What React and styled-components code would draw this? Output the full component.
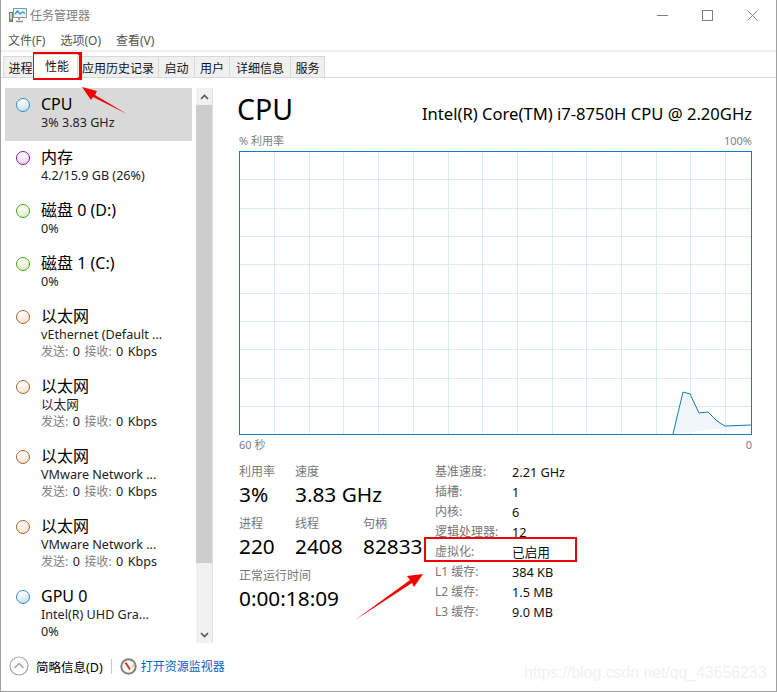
import React from 'react';
import styled, { createGlobalStyle } from 'styled-components';

const GlobalStyle = createGlobalStyle`
  html, body { margin: 0; padding: 0; background: #fff; }
  * { box-sizing: border-box; }
`;

const Window = styled.div`
  position: relative;
  width: 777px;
  height: 692px;
  overflow: hidden;
  display: flex;
  flex-direction: column;
  background: #fff;
  border: 1px solid #a0a0a0;
  border-top: none;
  font-family: "Noto Sans", "Noto Sans CJK SC", sans-serif;
  color: #000;
`;

const TitleBar = styled.div`
  height: 30px;
  display: flex;
  align-items: center;
  padding-left: 8px;
  gap: 3px;
  font-size: 12px;
  color: #808080;
`;

const WindowButtons = styled.div`
  margin-left: auto;
  display: flex;
  align-items: center;
  gap: 34px;
  padding-right: 18px;
`;

const MenuBar = styled.div`
  height: 20px;
  display: flex;
  align-items: center;
  padding-left: 7px;
  gap: 15px;
  font-size: 12px;
  color: #555;
`;

const TabBar = styled.div`
  height: 28px;
  padding: 4px 0 0 2px;
  display: flex;
  align-items: stretch;
  border-top: 2px solid #f0f0f0;
  border-bottom: 1px solid #d9d9d9;
`;

const Tab = styled.div`
  width: ${(p) => p.$w}px;
  display: flex;
  align-items: center;
  justify-content: center;
  font-size: 12px;
  background: #f0f0f0;
  border: 1px solid #d9d9d9;
  border-left-width: 0;
  border-bottom: none;
  color: #111;
  padding-top: 1px;

  &:first-child {
    border-left-width: 1px;
  }

  ${(p) => p.$active && `
    position: relative;
    z-index: 1;
    background: #fff;
    margin: -2px 0 -1px -4px;
    padding: 0 0 1px 3px;
  `}
`;

const Body = styled.div`
  flex: 1;
  display: flex;
  min-height: 0;
`;

const Sidebar = styled.div`
  width: 212px;
  padding: 10px 0 0 4px;
  display: flex;
  height: 565px;
  flex-shrink: 0;
`;

const List = styled.div`
  width: 187px;
  display: flex;
  flex-direction: column;
`;

const Item = styled.div`
  height: ${(p) => p.$h}px;
  flex-shrink: 0;
  display: flex;
  padding: 7px 0 0 11px;
  gap: 11px;
  background: ${(p) => (p.$selected ? '#d9d9d9' : 'transparent')};
`;

const Dot = styled.span`
  width: 14px;
  height: 14px;
  margin-top: 3px;
  border-radius: 50%;
  flex-shrink: 0;
  border: 1.5px solid ${(p) => p.$color};
  background: linear-gradient(160deg, #ffffff 20%, ${(p) => p.$fill} 100%);
`;

const ItemText = styled.div`
  display: flex;
  flex-direction: column;
`;

const ItemTitle = styled.div`
  font-size: 16px;
  line-height: 19px;
  height: 19px;
  white-space: nowrap;
`;

const ItemSub = styled.div`
  font-size: 12.6px;
  line-height: 17px;
  height: 17px;
  white-space: nowrap;
  color: #222;
  word-spacing: ${(p) => (p.$net ? 1.2 : 0)}px;
`;

const Muted = styled.span`
  color: #808080;
  font-size: 12px;
`;

const Scrollbar = styled.div`
  width: 17px;
  margin-left: 4px;
  background: #f0f0f0;
  display: flex;
  flex-direction: column;
  align-items: stretch;
  border-right: 1px solid #e0e0e0;
`;

const ScrollArrow = styled.div`
  height: 17px;
  display: flex;
  align-items: center;
  justify-content: center;
`;

const ScrollThumb = styled.div`
  height: 458px;
  background: #cdcdcd;
`;

const ScrollSpace = styled.div`
  flex: 1;
`;

const Content = styled.div`
  flex: 1;
  padding: 14px 24px 0 26px;
  display: flex;
  flex-direction: column;
  min-width: 0;
`;

const Header = styled.div`
  display: flex;
  align-items: flex-end;
  justify-content: space-between;
  height: 35px;
`;

const BigTitle = styled.div`
  font-size: 28.5px;
  line-height: 35px;
  margin-left: -2px;
`;

const Model = styled.div`
  font-size: 16.6px;
  line-height: 22px;
  padding-bottom: 2px;
`;

const ChartCaption = styled.div`
  display: flex;
  justify-content: space-between;
  font-size: 11px;
  line-height: 15px;
  height: 15px;
  margin-top: ${(p) => p.$top}px;
  color: #808080;
`;

const Chart = styled.svg`
  display: block;
  margin-top: 3px;
  width: 513px;
  height: 284px;
`;

const Stats = styled.div`
  display: flex;
  margin-top: 11px;
`;

const StatsLeft = styled.div`
  width: 196px;
  display: flex;
  flex-direction: column;
`;

const StatRow = styled.div`
  display: flex;
  height: 52px;
`;

const Stat = styled.div`
  width: ${(p) => p.$w}px;
  flex-shrink: 0;
`;

const StatLabel = styled.div`
  font-size: 12px;
  line-height: 17px;
  color: #777;
  white-space: nowrap;
`;

const StatValue = styled.div`
  font-size: 20.8px;
  line-height: 28px;
  white-space: nowrap;
`;

const Specs = styled.div`
  display: grid;
  grid-template-columns: 77px auto;
  grid-auto-rows: 20px;
  align-content: start;
  font-size: 12px;
  line-height: 20px;
  margin-top: -1px;
`;

const SpecKey = styled.div`
  color: #777;
  white-space: nowrap;
`;

const SpecValue = styled.div`
  color: #111;
  white-space: nowrap;
  font-size: 12.7px;
`;

const Footer = styled.div`
  position: absolute;
  left: 8px;
  bottom: 15px;
  display: flex;
  align-items: center;
  height: 20px;
`;

const FooterLabel = styled.span`
  font-size: 12.5px;
  margin-left: 7px;
`;

const Separator = styled.span`
  width: 1px;
  height: 15px;
  margin: 0 8px;
  background: #c8c8c8;
`;

const FooterLink = styled.span`
  font-size: 12px;
  margin-left: 4px;
  color: #0066cc;
`;

const Mark = styled.div`
  position: absolute;
  left: ${(p) => p.$x}px;
  top: ${(p) => p.$y}px;
  width: ${(p) => p.$w}px;
  height: ${(p) => p.$h}px;
  border: ${(p) => p.$b}px solid #f00000;
  pointer-events: none;
`;

const ArrowLayer = styled.svg`
  position: absolute;
  left: -1px;
  top: 0;
  width: 777px;
  height: 692px;
  pointer-events: none;
`;

const Watermark = styled.div`
  position: absolute;
  left: 523px;
  top: 663px;
  font-family: "Liberation Sans", sans-serif;
  font-size: 15.8px;
  line-height: 20px;
  color: #f1f1f1;
  white-space: nowrap;
`;

const BLUE = { color: '#2f8fc4', fill: '#bcd8ee' };
const PURPLE = { color: '#8b12ae', fill: '#e6d0ee' };
const GREEN = { color: '#4da60c', fill: '#d5ebc3' };
const ORANGE = { color: '#a7642a', fill: '#f5dcc6' };

const items = [
  { ...BLUE, h: 53, title: 'CPU', lines: ['3% 3.83 GHz'], selected: true },
  { ...PURPLE, h: 53, title: '内存', lines: ['4.2/15.9 GB (26%)'] },
  { ...GREEN, h: 53, title: '磁盘 0 (D:)', lines: ['0%'] },
  { ...GREEN, h: 53, title: '磁盘 1 (C:)', lines: ['0%'] },
  { ...ORANGE, h: 70, title: '以太网', lines: ['vEthernet (Default ...'], net: true },
  { ...ORANGE, h: 70, title: '以太网', lines: ['以太网'], net: true },
  { ...ORANGE, h: 70, title: '以太网', lines: ['VMware Network ...'], net: true },
  { ...ORANGE, h: 70, title: '以太网', lines: ['VMware Network ...'], net: true },
  { ...BLUE, h: 65, title: 'GPU 0', lines: ['Intel(R) UHD Gra...', '0%'] },
];

const tabs = [
  { label: '进程', w: 35 },
  { label: '性能', w: 44, active: true },
  { label: '应用历史记录', w: 81 },
  { label: '启动', w: 36 },
  { label: '用户', w: 35 },
  { label: '详细信息', w: 61 },
  { label: '服务', w: 34 },
];

const specs = [
  ['基准速度:', '2.21 GHz'],
  ['插槽:', '1'],
  ['内核:', '6'],
  ['逻辑处理器:', '12'],
  ['虚拟化:', '已启用'],
  ['L1 缓存:', '384 KB'],
  ['L2 缓存:', '1.5 MB'],
  ['L3 缓存:', '9.0 MB'],
];

const AppIcon = () => (
  <svg width="18" height="16" viewBox="0 0 18 16">
    <rect x="0.5" y="5.5" width="3" height="9" fill="#d6d6d6" stroke="#6f7a6f" />
    <rect x="1" y="12" width="2" height="2" fill="#6bb04a" />
    <rect x="4.5" y="1.5" width="13" height="9" fill="#e6f4fb" stroke="#8a98a2" />
    <path d="M6 7l2.5-3 2.5 3 2.5-2 2.5 1.5" fill="none" stroke="#2f8fd0" strokeWidth="1.2" />
    <path d="M10 11v2M7 14.5h7" stroke="#8a8a8a" strokeWidth="1.5" />
  </svg>
);

const MonitorIcon = () => (
  <svg width="17" height="17" viewBox="0 0 17 17">
    <circle cx="8.5" cy="8.5" r="7.2" fill="#fbf7f2" stroke="#808080" strokeWidth="2" />
    <path d="M5.5 4.5l4.5 7" stroke="#d92c1d" strokeWidth="1.8" />
    <path d="M13 6.5v3" stroke="#c9a36a" />
  </svg>
);

const CpuChart = () => {
  const vLines = [];
  for (let x = 35; x < 512; x += 34.7) vLines.push(Math.round(x) + 0.5);
  const hLines = [];
  for (let y = 28.4; y < 283; y += 28.3) hLines.push(Math.round(y) + 0.5);
  const points = '434,283 444,241 451,243 460,262 469,261 478,270 486,275 512,274';
  return (
    <Chart viewBox="0 0 513 284">
      <rect x="0.5" y="0.5" width="512" height="283" fill="#fff" />
      {vLines.map((x) => (
        <line key={x} x1={x} x2={x} y1="1" y2="283" stroke="#d9eaf4" />
      ))}
      {hLines.map((y) => (
        <line key={y} x1="1" x2="512" y1={y} y2={y} stroke="#d9eaf4" />
      ))}
      <polygon points={points} fill="#f1f6fa" />
      <polyline points={points} fill="none" stroke="#117dbb" />
      <rect x="0.5" y="0.5" width="512" height="283" fill="none" stroke="#117dbb" />
    </Chart>
  );
};

export default function App() {
  return (
    <>
      <GlobalStyle />
      <Window>
        <TitleBar>
          <AppIcon />
          <span>任务管理器</span>
          <WindowButtons>
            <svg width="11" height="11" viewBox="0 0 11 11"><path d="M0 5.5h11" stroke="#808080" /></svg>
            <svg width="11" height="11" viewBox="0 0 11 11"><rect x="0.5" y="0.5" width="10" height="10" fill="none" stroke="#808080" /></svg>
            <svg width="11" height="11" viewBox="0 0 11 11"><path d="M0.5 0.5l10 10M10.5 0.5l-10 10" stroke="#808080" /></svg>
          </WindowButtons>
        </TitleBar>
        <MenuBar>
          <span>文件(F)</span>
          <span>选项(O)</span>
          <span>查看(V)</span>
        </MenuBar>
        <TabBar>
          {tabs.map((t) => (
            <Tab key={t.label} $w={t.w} $active={t.active}>{t.label}</Tab>
          ))}
        </TabBar>
        <Body>
          <Sidebar>
            <List>
              {items.map((it, i) => (
                <Item key={i} $h={it.h} $selected={it.selected}>
                  <Dot $color={it.color} $fill={it.fill} />
                  <ItemText>
                    <ItemTitle>{it.title}</ItemTitle>
                    {it.lines.map((l) => <ItemSub key={l}>{l}</ItemSub>)}
                    {it.net && <ItemSub $net><Muted>发送:</Muted> 0 <Muted>接收:</Muted> 0 Kbps</ItemSub>}
                  </ItemText>
                </Item>
              ))}
            </List>
            <Scrollbar>
              <ScrollArrow>
                <svg width="9" height="6" viewBox="0 0 9 6"><path d="M1 5l3.5-3.5L8 5" fill="none" stroke="#555" strokeWidth="1.6" /></svg>
              </ScrollArrow>
              <ScrollThumb />
              <ScrollSpace />
              <ScrollArrow>
                <svg width="9" height="6" viewBox="0 0 9 6"><path d="M1 1l3.5 3.5L8 1" fill="none" stroke="#555" strokeWidth="1.6" /></svg>
              </ScrollArrow>
            </Scrollbar>
          </Sidebar>
          <Content>
            <Header>
              <BigTitle>CPU</BigTitle>
              <Model>Intel(R) Core(TM) i7-8750H CPU @ 2.20GHz</Model>
            </Header>
            <ChartCaption $top={6}><span>% 利用率</span><span>100%</span></ChartCaption>
            <CpuChart />
            <ChartCaption $top={2}><span>60 秒</span><span>0</span></ChartCaption>
            <Stats>
              <StatsLeft>
                <StatRow>
                  <Stat $w={56}><StatLabel>利用率</StatLabel><StatValue>3%</StatValue></Stat>
                  <Stat $w={68}><StatLabel>速度</StatLabel><StatValue>3.83 GHz</StatValue></Stat>
                </StatRow>
                <StatRow>
                  <Stat $w={56}><StatLabel>进程</StatLabel><StatValue>220</StatValue></Stat>
                  <Stat $w={68}><StatLabel>线程</StatLabel><StatValue>2408</StatValue></Stat>
                  <Stat $w={60}><StatLabel>句柄</StatLabel><StatValue>82833</StatValue></Stat>
                </StatRow>
                <StatRow>
                  <Stat $w={120}><StatLabel>正常运行时间</StatLabel><StatValue>0:00:18:09</StatValue></Stat>
                </StatRow>
              </StatsLeft>
              <Specs>
                {specs.map(([k, v]) => (
                  <React.Fragment key={k}>
                    <SpecKey>{k}</SpecKey>
                    <SpecValue>{v}</SpecValue>
                  </React.Fragment>
                ))}
              </Specs>
            </Stats>
          </Content>
        </Body>
        <Footer>
          <svg width="20" height="20" viewBox="0 0 20 20">
            <circle cx="10" cy="10" r="9" fill="#fff" stroke="#a8a8a8" strokeWidth="1.2" />
            <path d="M5.5 12l4.5-4.5 4.5 4.5" fill="none" stroke="#a0a0a0" strokeWidth="1.3" />
          </svg>
          <FooterLabel>简略信息(D)</FooterLabel>
          <Separator />
          <MonitorIcon />
          <FooterLink>打开资源监视器</FooterLink>
        </Footer>
        <Mark $x={32} $y={52} $w={49} $h={28} $b={3} />
        <Mark $x={423} $y={537} $w={153} $h={25} $b={2} />
        <ArrowLayer viewBox="0 0 777 692">
          <path d="M127 114L95 95L97 91L82 87L91 100L93 97Z" fill="#f00000" />
          <path d="M355 620L412 583L414 587L423 574L407 576L410 580Z" fill="#f00000" />
        </ArrowLayer>
        <Watermark>https://blog.csdn.net/qq_43656233</Watermark>
      </Window>
    </>
  );
}
